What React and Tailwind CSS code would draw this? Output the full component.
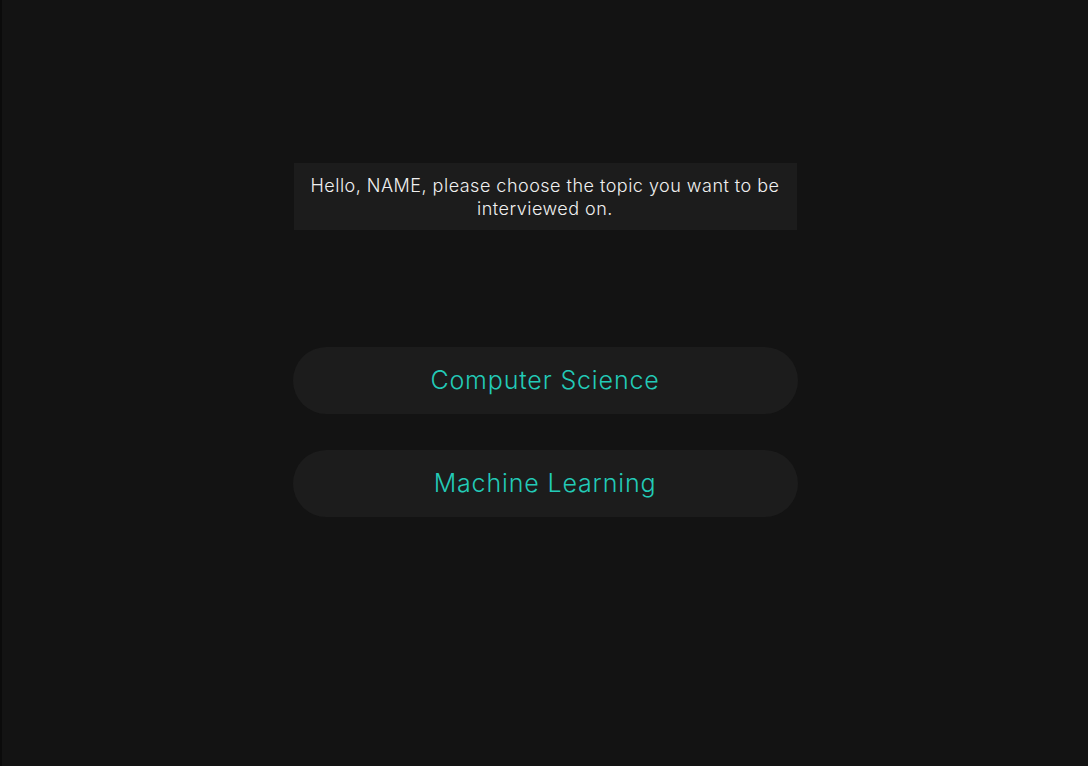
import React from 'react';

const topics = ['Computer Science', 'Machine Learning'];

const App = () => {
    return (
        <div className="min-h-screen w-full flex bg-[#131313] border-l-2 border-[#0b0b0b]" style={{ fontFamily: 'Inter, "Noto Sans", sans-serif' }}>
            <div className="flex-1 flex flex-col items-center pt-[163px]">
                <div className="w-[503px] bg-[#1c1c1c] pt-[11px] pb-[10px] px-2 text-center text-[18px] leading-[23px] font-light tracking-[0.027em] text-[#f0f0f0]">
                    Hello, NAME, please choose the topic you want to be interviewed on.
                </div>

                <div className="flex flex-col gap-[36px] mt-[117px]">
                    {topics.map((topic) => (
                        <button
                            key={topic}
                            className="w-[505px] h-[67px] rounded-full bg-[#1c1c1c] text-[25px] font-light tracking-[0.034em] text-[#23cab7] flex items-center justify-center"
                        >
                            {topic}
                        </button>
                    ))}
                </div>
            </div>
        </div>
    );
};

export default App;
